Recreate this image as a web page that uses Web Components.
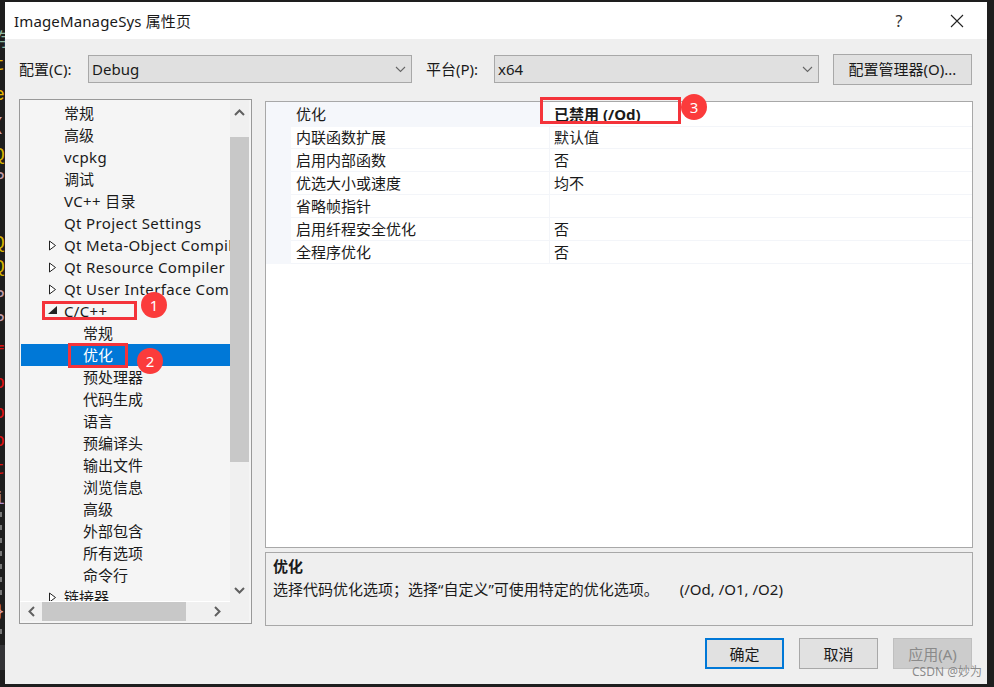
<!DOCTYPE html>
<html><head><meta charset="utf-8">
<style>
html,body{margin:0;padding:0;background:#1e1e1e;width:994px;height:687px;overflow:hidden;}
body{font:15px/22px "Noto Sans","Noto Sans CJK SC",sans-serif;color:#1a1a1a;}
</style></head><body>
<template id="t-dialog"><style>
:host{display:flex;flex-direction:column;position:absolute;left:5px;top:2px;width:982px;height:682px;background:#efefef;font-family:"Noto Sans","Noto Sans CJK SC",sans-serif;font-size:15px;color:#1a1a1a}
</style><slot></slot></template>

<template id="t-title"><style>
:host{display:flex;align-items:center;height:37px;background:#fff;padding:0 23px 0 9px;flex:none;font-size:15px;letter-spacing:.14px}
.t{flex:1}
.h{width:18px;text-align:center;font-size:16px;margin-right:42px;color:#333}
svg{display:block}
</style><span class="t"><slot></slot></span><span class="h">?</span><svg width="14" height="14" viewBox="0 0 14 14"><path d="M1 1L13 13M13 1L1 13" stroke="#222" stroke-width="1.1" fill="none"/></svg></template>

<template id="t-combo"><style>
:host{display:flex;align-items:center;box-sizing:border-box;height:28px;background:#e0e0e0;border:1px solid #a8a8a8;padding:0 3px;font-size:15px}
.v{flex:1}
svg{display:block;margin-right:2px}
</style><span class="v"><slot></slot></span><svg width="11" height="7" viewBox="0 0 11 7"><path d="M1 1L5.5 5.5L10 1" stroke="#666" stroke-width="1.1" fill="none"/></svg></template>

<template id="t-btn"><style>
:host{display:flex;align-items:center;justify-content:center;box-sizing:border-box;background:#e1e1e1;border:1px solid #a8a8a8;height:31px;flex:none}
:host([primary]){border:2px solid #0078d7}
:host([disabled]){background:#cccccc;color:#8a8a8a;border-color:#bfbfbf}
</style><slot></slot></template>

<template id="t-row"><style>
:host{display:flex;align-items:center;height:22px;flex:none;white-space:nowrap;position:relative}
:host([level="1"]){padding-left:43px}
:host([level="2"]){padding-left:62px}
:host([latin]){letter-spacing:.35px}
:host([selected]){background:#0078d7;color:#fff}
.a{position:absolute;left:27px;top:6px;width:9px;height:11px}
svg{display:block}
</style><span class="a" id="a"></span><slot></slot></template>

<template id="t-tree"><style>
:host{display:grid;grid-template-columns:210px 1fr;grid-template-rows:502px 1fr;box-sizing:border-box;width:233px;height:525px;border:1px solid #999;background:#f5f5f5;flex:none}
.list{grid-column:1;grid-row:1;overflow:hidden;padding:2px 0 0 1px;display:flex;flex-direction:column;min-width:0;box-sizing:border-box;border-bottom:1px solid #fff}
.vs{grid-column:2;grid-row:1;background:#f0f0f0;margin-right:2px;display:flex;flex-direction:column}
.vs .arrow{height:37px;display:flex;align-items:center;justify-content:center;flex:none;padding-bottom:13px;box-sizing:border-box}
.vs .thumb{height:325px;background:#c8c8c8;flex:none}
.vs .sp{flex:1}
.vs .arrow.d{height:23px;padding-bottom:1px}
.hs{grid-column:1 / 3;grid-row:2;background:#f0f0f0;margin:0 2px 2px 1px;padding-right:21px;display:flex;align-items:center}
.hs .arrow{width:21px;display:flex;justify-content:center;flex:none}
.hs .thumb{width:144px;height:19px;background:#c8c8c8;flex:none}
.hs .sp{flex:1}
svg{display:block}
</style>
<div class="list"><slot></slot></div>
<div class="vs"><div class="arrow"><svg width="11" height="7" viewBox="0 0 11 7"><path d="M1 6L5.5 1.5L10 6" stroke="#606060" stroke-width="2" fill="none"/></svg></div><div class="thumb"></div><div class="sp"></div><div class="arrow d"><svg width="11" height="7" viewBox="0 0 11 7"><path d="M1 1L5.5 5.5L10 1" stroke="#606060" stroke-width="2" fill="none"/></svg></div></div>
<div class="hs"><div class="arrow"><svg width="7" height="11" viewBox="0 0 7 11"><path d="M6 1L1.5 5.5L6 10" stroke="#606060" stroke-width="2" fill="none"/></svg></div><div class="thumb"></div><div class="sp"></div><div class="arrow"><svg width="7" height="11" viewBox="0 0 7 11"><path d="M1 1L5.5 5.5L1 10" stroke="#606060" stroke-width="2" fill="none"/></svg></div></div>
</template>

<template id="t-grid"><style>
:host{display:flex;flex-direction:column;box-sizing:border-box;height:447px;border:1px solid #a8a8a8;background:#fff;flex:none}
</style><slot></slot></template>

<template id="t-prop"><style>
:host{display:grid;grid-template-columns:25px 259px 1fr;height:23px;flex:none}
.g{background:#f5f7fb}
.n{padding-left:5px;border-right:1px solid #f3f5f9;border-bottom:1px solid #f3f5f9;line-height:22px;box-sizing:border-box;white-space:nowrap}
.v{padding-left:4px;border-bottom:1px solid #f3f5f9;line-height:22px;box-sizing:border-box}
:host([active]) .n{background:#f5f7fb;border-color:#f5f7fb}
:host([active]) .v{font-weight:700}
:host([active]){height:24px}
:host([active]) .n,:host([active]) .v{line-height:24px}
</style><div class="g"></div><div class="n"><slot name="n"></slot></div><div class="v"><slot name="v"></slot></div></template>

<template id="t-desc"><style>
:host{display:block;box-sizing:border-box;height:74px;border:1px solid #a8a8a8;background:#efefef;padding:2px 7px;flex:none;line-height:23px}
b{display:block;font-weight:700}
.m{display:flex;white-space:nowrap}
.x{margin-left:21px}
</style><b><slot name="h"></slot></b><div class="m"><span><slot></slot></span><span class="x"><slot name="f"></slot></span></div></template>

<template id="t-badge"><style>
:host{position:absolute;display:flex;align-items:center;justify-content:center;width:26px;height:26px;border-radius:50%;background:#fb3b3b;color:#fff;font:15px "Noto Sans",sans-serif;z-index:5}
</style><slot></slot></template>

<template id="t-mark"><style>
:host{position:absolute;display:block;box-sizing:border-box;border:3px solid #f4333a;z-index:5}
</style></template>

<template id="t-strip"><style>
:host{position:absolute;left:0;top:0;width:5px;height:687px;overflow:hidden;font:18px/22px "Liberation Mono","Noto Sans CJK SC",monospace}
span{position:absolute;left:-6px;white-space:pre}
i{position:absolute;left:0;width:2px;height:5px;background:#777}
b{position:absolute;left:0;width:5px}
</style><slot></slot></template>

<ms-strip id="strip"></ms-strip>

<ms-dialog>
  <ms-title>ImageManageSys 属性页</ms-title>
  <div style="display:flex;align-items:center;height:60px;padding:0 15px 0 14px;flex:none;box-sizing:border-box">
    <span style="width:69px;flex:none">配置(C):</span>
    <ms-combo style="width:324px;flex:none">Debug</ms-combo>
    <span style="width:82px;flex:none;padding-left:14px;box-sizing:border-box">平台(P):</span>
    <ms-combo style="width:325px;flex:none">x64</ms-combo>
    <ms-btn style="width:139px;margin-left:14px">配置管理器(O)...</ms-btn>
  </div>
  <div style="display:flex;gap:13px;padding:0 14px;flex:none;height:527px;box-sizing:border-box">
    <ms-tree>
      <ms-row level="1">常规</ms-row><ms-row level="1">高级</ms-row><ms-row level="1" latin>vcpkg</ms-row><ms-row level="1">调试</ms-row><ms-row level="1" latin>VC++ 目录</ms-row><ms-row level="1" latin>Qt Project Settings</ms-row>
      <ms-row level="1" latin arrow="closed">Qt Meta-Object Compiler</ms-row><ms-row level="1" latin arrow="closed">Qt Resource Compiler</ms-row><ms-row level="1" latin arrow="closed">Qt User Interface Compiler</ms-row>
      <ms-row level="1" latin arrow="open">C/C++</ms-row>
      <ms-row level="2">常规</ms-row><ms-row level="2" selected>优化</ms-row><ms-row level="2">预处理器</ms-row><ms-row level="2">代码生成</ms-row><ms-row level="2">语言</ms-row><ms-row level="2">预编译头</ms-row><ms-row level="2">输出文件</ms-row><ms-row level="2">浏览信息</ms-row><ms-row level="2">高级</ms-row><ms-row level="2">外部包含</ms-row><ms-row level="2">所有选项</ms-row><ms-row level="2">命令行</ms-row>
      <ms-row level="1" arrow="closed">链接器</ms-row>
    </ms-tree>
    <div style="display:flex;flex-direction:column;gap:4px;width:708px;padding-top:2px;flex:none">
      <ms-grid>
        <ms-prop active><span slot="n">优化</span><span slot="v">已禁用 (/Od)</span></ms-prop>
        <ms-prop><span slot="n">内联函数扩展</span><span slot="v">默认值</span></ms-prop>
        <ms-prop><span slot="n">启用内部函数</span><span slot="v">否</span></ms-prop>
        <ms-prop><span slot="n">优选大小或速度</span><span slot="v">均不</span></ms-prop>
        <ms-prop><span slot="n">省略帧指针</span><span slot="v"></span></ms-prop>
        <ms-prop><span slot="n">启用纤程安全优化</span><span slot="v">否</span></ms-prop>
        <ms-prop><span slot="n">全程序优化</span><span slot="v">否</span></ms-prop>
      </ms-grid>
      <ms-desc><span slot="h">优化</span>选择代码优化选项；选择“自定义”可使用特定的优化选项。<span slot="f">(/Od, /O1, /O2)</span></ms-desc>
    </div>
  </div>
  <div style="display:flex;justify-content:flex-end;gap:15px;padding:12px 15px 0 0;flex:none;box-sizing:border-box">
    <ms-btn primary style="width:79px">确定</ms-btn><ms-btn style="width:79px">取消</ms-btn><ms-btn disabled style="width:79px">应用(A)</ms-btn>
  </div>
</ms-dialog>

<ms-mark style="left:42px;top:301px;width:95px;height:19px"></ms-mark>
<ms-mark style="left:68px;top:343px;width:60px;height:25px"></ms-mark>
<ms-mark style="left:540px;top:97px;width:141px;height:27px"></ms-mark>
<ms-badge style="left:141px;top:292px">1</ms-badge>
<ms-badge style="left:137px;top:348px">2</ms-badge>
<ms-badge style="left:681px;top:94px">3</ms-badge>
<span style="position:absolute;left:912px;top:664px;font:12px/16px 'Noto Sans','Noto Sans CJK SC',sans-serif;color:rgba(120,120,120,.85);z-index:6">CSDN @妙为</span>

<script>
function def(name,tid,init){customElements.define(name,class extends HTMLElement{constructor(){super();const s=this.attachShadow({mode:'open'});s.appendChild(document.getElementById(tid).content.cloneNode(true));}connectedCallback(){init&&init.call(this)}});}
['dialog','title','combo','btn','tree','grid','prop','desc','badge','mark'].forEach(n=>def('ms-'+n,'t-'+n));
def('ms-row','t-row',function(){const a=this.getAttribute('arrow');const el=this.shadowRoot.getElementById('a');
 if(a==='closed')el.innerHTML='<svg width="9" height="11" viewBox="0 0 9 11"><path d="M1.5 1L7.5 5.5L1.5 10Z" fill="#fff" stroke="#222" stroke-width="1"/></svg>';
 if(a==='open')el.innerHTML='<svg width="9" height="11" viewBox="0 0 9 11"><path d="M0 8L9 8L9 0Z" fill="#222"/></svg>';});
def('ms-strip','t-strip',function(){
 const L=[['存',30,'#8fb8a0'],['t',54,'#e6b800'],['e',84,'#e6b800'],['(',114,'#d8a8c0'],['Q',144,'#d6b400'],['P',168,'#c09aa8'],['Q',232,'#d6b400'],['Q',256,'#d6b400'],['P',286,'#c09aa8'],['P',310,'#c09aa8'],['f',342,'#e01010'],['o',372,'#e01010'],['o',402,'#e01010'],['o',430,'#e01010'],['t',458,'#e01010'],['i',488,'#b090d0'],['}',600,'#e0a0a0']];
 let h='';L.forEach(([c,y,k])=>h+=`<span style="top:${y}px;color:${k}">${c}</span>`);
 for(let y=512;y<640;y+=13){if(y<600||y>622)h+=`<i style="top:${y}px"></i>`;}
 h+='<b style="top:645px;height:25px;background:#333336"></b>';
 this.shadowRoot.appendChild(document.createRange().createContextualFragment(h));
});
</script>
</body></html>
